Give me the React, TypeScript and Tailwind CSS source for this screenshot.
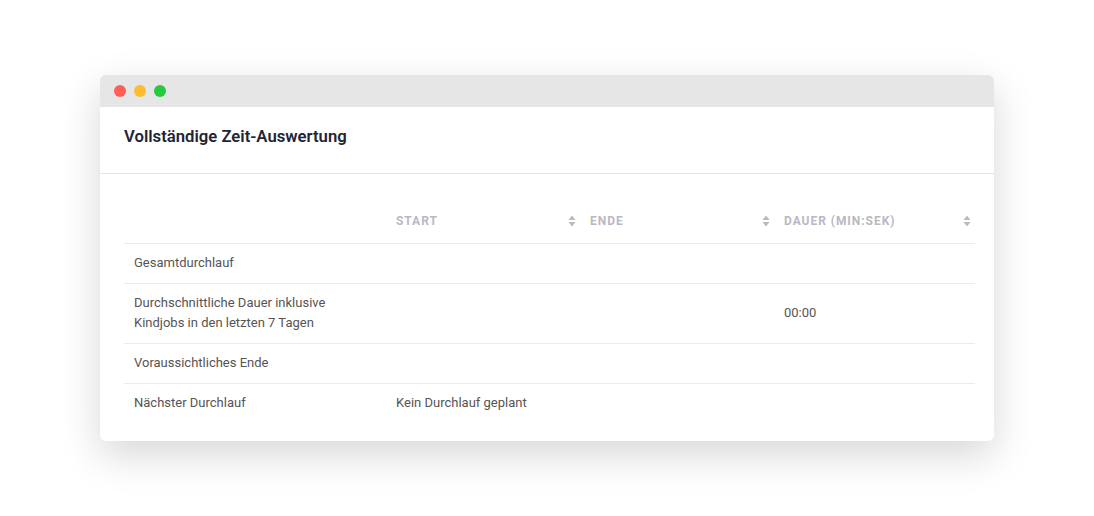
import { ReactNode } from "react";

function SortIcon() {
  return (
    <svg width="8" height="12" viewBox="0 0 8 12" className="shrink-0">
      <path d="M4 0.5 L7.5 5 H0.5 Z" fill="#b9b9c3" />
      <path d="M4 11.5 L7.5 7 H0.5 Z" fill="#b9b9c3" />
    </svg>
  );
}

function HeadCell({ label, sort }: { label?: string; sort?: boolean }) {
  return (
    <th className="pl-[10px] pr-[4px] h-[44px] align-middle font-normal">
      <div className="flex items-center justify-between">
        <span className="text-[12px] font-bold tracking-[0.08em] uppercase text-[#b9b9c3]">{label}</span>
        {sort && <SortIcon />}
      </div>
    </th>
  );
}

function Row({ cells, tall }: { cells: ReactNode[]; tall?: boolean }) {
  return (
    <tr className="border-t border-[#ebebeb]">
      {cells.map((c, i) => (
        <td
          key={i}
          className={`px-[10px] align-middle text-[13px] leading-[20px] text-[#555555] ${tall ? "h-[60px]" : "h-[40px]"}`}
        >
          {c}
        </td>
      ))}
    </tr>
  );
}

export default function App() {
  return (
    <div
      className="min-h-screen bg-white pt-[75px] pl-[100px]"
      style={{ fontFamily: "Roboto, 'Liberation Sans', sans-serif" }}
    >
      <div className="w-[894px] rounded-[6px] bg-white shadow-[0_14px_40px_rgba(0,0,0,0.16)] overflow-hidden">
        {/* title bar */}
        <div className="h-[32px] bg-[#e6e6e6] flex items-center gap-[8px] pl-[14px]">
          <span className="w-[12px] h-[12px] rounded-full bg-[#ff5f57]" />
          <span className="w-[12px] h-[12px] rounded-full bg-[#febc2e]" />
          <span className="w-[12px] h-[12px] rounded-full bg-[#28c840]" />
        </div>

        {/* header */}
        <div className="h-[67px] px-[24px] pb-[6px] flex items-center border-b border-[#e5e5e5]">
          <h2 className="text-[16.7px] font-semibold text-[#222433]">Vollständige Zeit-Auswertung</h2>
        </div>

        {/* table */}
        <div className="px-[24px] pt-[25px] pb-[18px]">
          <table className="w-[851px] table-fixed border-collapse text-left">
            <colgroup>
              <col className="w-[262px]" />
              <col className="w-[194px]" />
              <col className="w-[194px]" />
              <col className="w-[201px]" />
            </colgroup>
            <thead>
              <tr>
                <HeadCell />
                <HeadCell label="Start" sort />
                <HeadCell label="Ende" sort />
                <HeadCell label="Dauer (min:sek)" sort />
              </tr>
            </thead>
            <tbody>
              <Row cells={["Gesamtdurchlauf", "", "", ""]} />
              <Row
                tall
                cells={[
                  <>
                    Durchschnittliche Dauer inklusive
                    <br />
                    Kindjobs in den letzten 7 Tagen
                  </>,
                  "",
                  "",
                  "00:00",
                ]}
              />
              <Row cells={["Voraussichtliches Ende", "", "", ""]} />
              <Row cells={["Nächster Durchlauf", "Kein Durchlauf geplant", "", ""]} />
            </tbody>
          </table>
        </div>
      </div>
    </div>
  );
}
